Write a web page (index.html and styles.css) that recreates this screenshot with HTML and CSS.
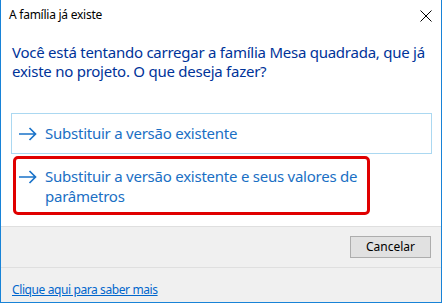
FILE: index.html
```html
<!DOCTYPE html>
<html lang="pt">
<head>
<meta charset="utf-8">
<link rel="stylesheet" href="styles.css">
</head>
<body>
<div class="window">
  <div class="titlebar">
    <span class="title">A família já existe</span>
    <svg class="close" width="12" height="12" viewBox="0 0 12 12"><path d="M0.5 0.5 L11.5 11.5 M11.5 0.5 L0.5 11.5" stroke="#000" stroke-width="1" fill="none"/></svg>
  </div>
  <div class="content">
    <p class="instruction">Você está tentando carregar a família Mesa quadrada, que já existe no projeto. O que deseja fazer?</p>
    <div class="links">
      <a class="cmd cmd-hover" href="#">
        <svg class="arrow" width="18" height="14" viewBox="0 0 18 14"><path d="M0 7 H16.5 M10.5 1 L16.5 7 L10.5 13" stroke="#1a73c9" stroke-width="1.7" fill="none"/></svg>
        <span class="cmd-text">Substituir a versão existente</span>
      </a>
      <a class="cmd" href="#">
        <svg class="arrow" width="18" height="14" viewBox="0 0 18 14"><path d="M0 7 H16.5 M10.5 1 L16.5 7 L10.5 13" stroke="#1a73c9" stroke-width="1.7" fill="none"/></svg>
        <span class="cmd-text">Substituir a versão existente e seus valores de parâmetros</span>
        <span class="annot"></span>
      </a>
    </div>
  </div>
  <div class="buttons">
    <button class="btn">Cancelar</button>
  </div>
  <div class="footer">
    <a class="more" href="#">Clique aqui para saber mais</a>
  </div>
</div>
</body>
</html>
```
FILE: styles.css
```css
html, body {
  margin: 0;
  padding: 0;
  background: #ffffff;
}
.window {
  width: 442px;
  height: 303px;
  box-sizing: border-box;
  border-left: 1px solid #1883d7;
  border-right: 1px solid #1883d7;
  border-bottom: 1px solid #1883d7;
  display: flex;
  flex-direction: column;
  font-family: "Noto Sans", "Open Sans", sans-serif;
  background: #ffffff;
}
.titlebar {
  height: 32px;
  flex: none;
  display: flex;
  align-items: flex-start;
  justify-content: space-between;
  padding: 7px 9px 0 8px;
  box-sizing: border-box;
}
.title {
  font-size: 12px;
  line-height: 16px;
  letter-spacing: -0.25px;
  color: #000;
}
.close {
  margin-top: 3px;
  display: block;
}
.content {
  flex: 1;
}
.instruction {
  margin: 11px 10px 0 11px;
  font-size: 15px;
  line-height: 19px;
  letter-spacing: -0.25px;
  color: #003399;
}
.links {
  display: flex;
  flex-direction: column;
  gap: 2px;
  margin: 32px 9px 0 10px;
}
.cmd {
  position: relative;
  display: flex;
  align-items: flex-start;
  gap: 8px;
  padding: 9px 10px 6px 7px;
  border: 1px solid transparent;
  text-decoration: none;
  color: #1a6fc4;
  font-size: 15px;
  line-height: 20px;
  letter-spacing: -0.24px;
}
.cmd-hover {
  border-color: #abd8f1;
  padding-bottom: 10px;
}
.arrow {
  flex: none;
  margin-top: 4px;
}
.annot {
  position: absolute;
  left: 1px;
  top: -1px;
  width: 351px;
  height: 53px;
  border: 3px solid #e00000;
  border-radius: 5px;
}
.buttons {
  height: 41px;
  flex: none;
  box-sizing: border-box;
  background: #f0f0f0;
  border-top: 1px solid #dfdfdf;
  display: flex;
  justify-content: flex-end;
  align-items: flex-start;
  padding: 9px 10px 0 0;
}
.btn {
  width: 81px;
  height: 22px;
  background: #e1e1e1;
  border: 1px solid #adadad;
  font-family: "Noto Sans", "Open Sans", sans-serif;
  font-size: 12px;
  color: #000;
  padding: 0;
  line-height: 18px;
}
.footer {
  height: 35px;
  flex: none;
  box-sizing: border-box;
  background: #f0f0f0;
  border-top: 1px solid #dfdfdf;
  padding: 9px 0 0 11px;
}
.more {
  font-size: 12px;
  line-height: 16px;
  letter-spacing: -0.4px;
  color: #0066cc;
  text-decoration: underline;
}
```
